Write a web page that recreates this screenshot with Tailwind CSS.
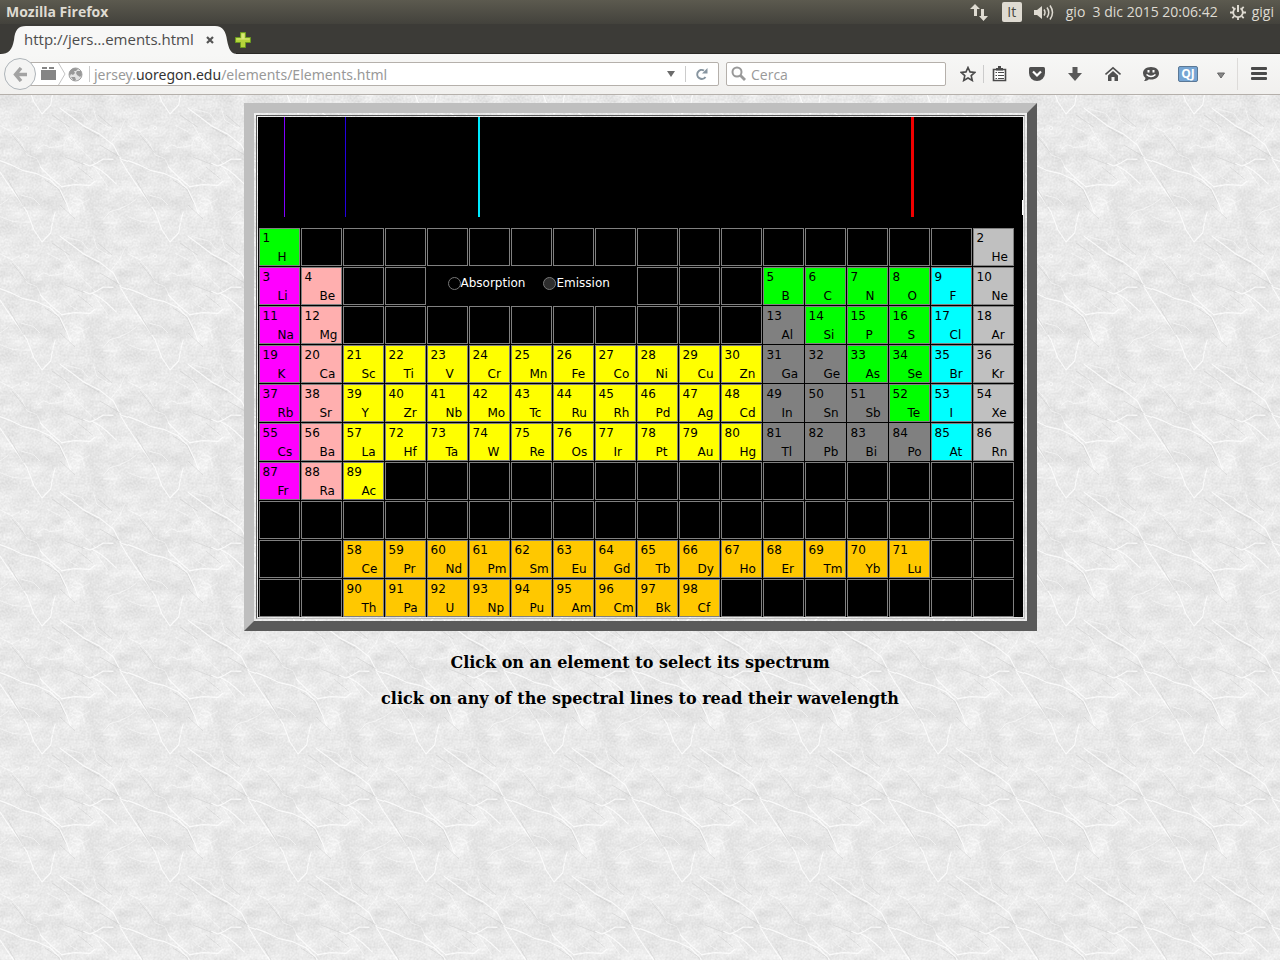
<!DOCTYPE html>
<html lang="it">
<head>
<meta charset="utf-8">
<title>Mozilla Firefox</title>
<script src="https://cdn.jsdelivr.net/npm/@tailwindcss/browser@4"></script>
</head>
<body class="min-h-screen flex flex-col font-['Open_Sans','Noto_Sans',sans-serif] text-sm">
<header>
  <div class="h-6 flex items-center justify-between px-1.5 bg-linear-to-b from-[#5c5a4f] to-[#43423c] text-[#dfdbd2]">
    <h1 class="font-bold text-sm">Mozilla Firefox</h1>
    <div class="flex items-center whitespace-nowrap">
      <svg class="w-[18px] h-[17px] mr-3.5" viewBox="0 0 18 17" fill="#dfdbd2"><path d="M5 0L10 5H7v7H4V5H0zM11 5h3v7h4l-4.500 5L9 12h2z"/></svg>
      <span class="w-5 h-5 mr-3 rounded-xs bg-[#dfdbd2] text-[#47463f] text-sm leading-5 text-center">It</span>
      <svg class="w-5 h-[17px] mr-3" viewBox="0 0 20 17" fill="none" stroke="#dfdbd2" stroke-width="1.500"><path d="M0 6h3l5-4v13l-5-4H0z" fill="#dfdbd2" stroke="none"/><path d="M10 5.500q2 3 0 6M13 3.500q3.500 5 0 10M16 1.500q5 7 0 14"/></svg>
      <time class="mr-3 whitespace-pre">gio  3 dic 2015 20:06:42</time>
      <svg class="w-4 h-4 mr-1.5" viewBox="0 0 16 16" fill="none" stroke="#dfdbd2"><path d="M5.500 4.300a4.800 4.800 0 1 0 5 0" stroke-width="1.800"/><path d="M8 1v7" stroke-width="2"/><path d="M2.300 2.800l2 2M13.700 2.800l-2 2M0 8.500h3M13 8.500h3M2.300 14.200l2-2M13.700 14.200l-2-2M8 13v3" stroke-width="1.800"/></svg>
      <span>gigi</span>
    </div>
  </div>
  <div class="h-[30px] bg-[#3c3b37] border-b border-[#2a2926] flex items-end">
    <div class="relative w-[236px] h-7 flex items-center pl-6 -mb-px">
      <svg class="absolute inset-0 w-[236px] h-7" viewBox="0 0 236 28"><path d="M0 28C9 28 12 24 14 14C15 4 18 0 26 0H215C223 0 226 6 227 14C229 24 231 28 238 28z" fill="#f7f7f6"/></svg>
      <span class="relative w-[178px] text-[15px] text-[#4c4c4c]">http://jers…ements.html</span>
      <button class="relative w-4 h-4 flex items-center justify-center" aria-label="Chiudi scheda"><svg class="w-2 h-2" viewBox="0 0 8 8" stroke="#555" stroke-width="2.200"><path d="M1 1l6 6M7 1L1 7"/></svg></button>
    </div>
    <button class="mb-[5px] -ml-px w-4 h-4" aria-label="Nuova scheda"><svg class="w-4 h-4" viewBox="0 0 16 16"><path d="M5.500 .5h5v5h5v5h-5v5h-5v-5h-5v-5h5z" fill="#b5d53b" stroke="#6b9a1f"/><path d="M6.500 1.500h3v5h5v1h-13v-1h5z" fill="#d8e87a"/></svg></button>
  </div>
  <div class="h-[41px] flex items-center bg-linear-to-b from-[#f7f7f6] to-[#f1f0ee] border-b border-[#b5b0ab] pl-1 pr-[13px]">
    <button class="relative z-10 shrink-0 w-8 h-8 rounded-full border border-[#aeb4b9] bg-[#f4f4f3] flex items-center justify-center" aria-label="Indietro"><svg class="w-[15px] h-[15px]" viewBox="0 0 15 15" fill="none" stroke="#a3a3a3" stroke-width="3.400"><path d="M14 7.500H3M8 1L2.500 7.500L8 14"/></svg></button>
    <div class="-ml-2 flex-1 h-6 min-w-0 bg-white border border-[#b5b0ab] rounded-r-xs flex items-center pl-3">
      <svg class="w-[15px] h-[14px] mr-0.5 shrink-0" viewBox="0 0 15 14"><path d="M0 3h15v10H0zM1 0h5v2H1zM8 0h5v2H8z" fill="#858585"/></svg>
      <svg class="w-2 h-[22px] mr-0.5 shrink-0" viewBox="0 0 8 22" fill="none" stroke="#c4c4c4"><path d="M.5 0L7 11L.5 22"/></svg>
      <svg class="w-[15px] h-[15px] shrink-0 mr-1.5" viewBox="0 0 15 15"><circle cx="7.500" cy="7.500" r="6.500" fill="#e2e2e2" stroke="#a0a0a0"/><path d="M1 7q1-5 6-6l3 1-2 2-2 0 1 2-2 2-2-1-1 2zM9 4l4 0 1 4-2 2-3-2-1-2zM3 10l4 0 1 3-2 1z" fill="#989898"/></svg>
      <span class="w-px h-4 bg-[#ccc] mr-1"></span>
      <a href="#" class="flex-1 pt-0.5 font-['Noto_Sans',sans-serif] text-[#999]">jersey.<span class="text-[#333]">uoregon.edu</span>/elements/Elements.html</a>
      <button class="w-7 h-5 flex items-center justify-center" aria-label="Cronologia"><svg class="w-2 h-1.5" viewBox="0 0 8 6"><path d="M0 0h8L4 6z" fill="#6b6b6b"/></svg></button>
      <span class="w-px h-4 bg-[#ccc]"></span>
      <button class="w-8 h-5 flex items-center justify-center" aria-label="Ricarica"><svg class="w-3 h-3" viewBox="0 0 12 12" fill="none" stroke="#8795a0" stroke-width="2"><path d="M9.500 9A4.500 4.500 0 1 1 8 2.500"/><path d="M11.500 0v5.500H6z" fill="#8795a0" stroke="none"/></svg></button>
    </div>
    <label class="ml-[7px] w-[220px] h-6 bg-white border border-[#b5b0ab] rounded-xs flex items-center pl-1">
      <svg class="w-4 h-4 mr-1" viewBox="0 0 16 16" fill="none" stroke="#999"><circle cx="6" cy="6" r="4.500" stroke-width="2"/><path d="M9 9l5 5" stroke-width="2.800"/></svg>
      <input class="w-44 pt-0.5 outline-none placeholder-[#999]" placeholder="Cerca" aria-label="Cerca">
    </label>
    <nav class="flex items-center ml-3.5">
      <button class="w-4 h-4" aria-label="Segnalibro"><svg class="w-4 h-4" viewBox="0 0 16 16" fill="none" stroke="#4a4a4a" stroke-width="1.600"><path d="M8 1.500l2 4.400 4.800.5-3.600 3.200 1.100 4.900L8 12l-4.300 2.500 1.100-4.900L1.200 6.400 6 5.900z"/></svg></button>
      <span class="w-px h-[18px] bg-[#ccc] ml-[7px] mr-2"></span>
      <button class="w-[15px] h-4 mr-[22px]" aria-label="Elenco segnalibri"><svg class="w-[15px] h-4" viewBox="0 0 15 16"><path d="M1.500 3.500h12v11h-12z" fill="#fff" stroke="#4a4a4a" stroke-width="1.600"/><path d="M4 2h2V0h3v2h2v2.500H4zM3.500 6h1.500v1H3.500zM6 6h6v1H6zM3.500 9h1.500v1H3.500zM6 9h6v1H6zM3.500 12h1.500v1H3.500zM6 12h6v1H6z" fill="#4a4a4a"/></svg></button>
      <button class="w-4 h-4 mr-[22px]" aria-label="Pocket"><svg class="w-4 h-4" viewBox="0 0 16 16"><path d="M1.500 1h13q1.500 0 1.500 1.500V7a8 8 0 0 1-16 0V2.500Q0 1 1.500 1z" fill="#4f4f4f"/><path d="M4 5.500l4 4 4-4" fill="none" stroke="#fff" stroke-width="2.200"/></svg></button>
      <button class="w-4 h-4 mr-[22px]" aria-label="Scaricamenti"><svg class="w-4 h-4" viewBox="0 0 16 16"><path d="M5.500 1h5v6H15l-7 8-7-8h4.500z" fill="#595959"/></svg></button>
      <button class="w-4 h-4 mr-[22px]" aria-label="Pagina iniziale"><svg class="w-4 h-4" viewBox="0 0 16 16"><path d="M.5 8.500L8 1.800l7.500 6.700" fill="none" stroke="#505050" stroke-width="1.600"/><path d="M3 9.500l5-4.500L13 9.500V15H9.500v-4h-3v4H3z" fill="#505050"/></svg></button>
      <button class="w-4 h-4 mr-[19px]" aria-label="Hello"><svg class="w-4 h-4" viewBox="0 0 16 16"><path d="M8 1c5 0 8 2.800 8 6.200S13 13.500 8 13.500q-1 0-2-.2Q4 15.500 1 15q1.500-1.500 1.500-3Q0 10 0 7.200C0 3.800 3 1 8 1z" fill="#505050"/><path d="M4.500 4h2v2.500h-2zM9.500 4h2v2.500h-2z" fill="#fff"/><path d="M3.500 8.500q4.500 4 9 0" fill="none" stroke="#fff" stroke-width="1.500"/></svg></button>
      <button class="w-5 h-4 rounded-xs border border-[#5b7896] bg-[#76a5d3] text-white font-bold text-xs leading-3.5 mr-[19px]" aria-label="QJ">QJ</button>
      <button class="w-2 h-4 mr-3" aria-label="Altro"><svg class="w-2 h-4" viewBox="0 0 8 16"><path d="M.5 7h7L4 12z" fill="#888" stroke="#666"/></svg></button>
      <span class="w-px h-8 bg-[#dddbd9] mr-[13px]"></span>
      <button class="w-4 h-4" aria-label="Menu"><svg class="w-4 h-4" viewBox="0 0 16 16" fill="#4a4a4a"><rect y="1" width="16" height="3" rx="1"/><rect y="6" width="16" height="3" rx="1"/><rect y="11" width="16" height="3" rx="1"/></svg></button>
    </nav>
  </div>
</header>
<main class="relative isolate flex-1 bg-[#e6e6e6] flex flex-col items-center pt-2">
  <svg class="absolute inset-0 w-full h-full -z-10" aria-hidden="true">
    <defs>
      <filter id="grain" x="0" y="0" width="100%" height="100%" color-interpolation-filters="sRGB"><feTurbulence type="fractalNoise" baseFrequency=".05 .07" numOctaves="6" seed="9" stitchTiles="stitch" result="soft"/><feColorMatrix values=".1 .06 0 0 .832  .1 .06 0 0 .832  .1 .06 0 0 .832  0 0 0 0 1" result="base"/><feTurbulence type="fractalNoise" baseFrequency=".5" numOctaves="2" seed="2" stitchTiles="stitch"/><feColorMatrix values=".1 0 0 0 0  .1 0 0 0 0  .1 0 0 0 0  0 0 0 0 1" result="fine"/><feComposite in="base" in2="fine" operator="arithmetic" k1="0" k2="1" k3="1" k4="-.05"/></filter>
      <pattern id="marble" width="128" height="128" patternUnits="userSpaceOnUse">
        <rect width="128" height="128" filter="url(#grain)"/>
        <g transform="scale(.33333)" fill="none" stroke-linejoin="round">
          <g stroke="#fff" stroke-width="3.500" opacity=".8">
            <path d="M-14 192L30 208L70 227L110 236L150 254L180 284L200 325L212 358"/>
            <path d="M180 40L215 65L250 92L300 118L340 150L362 192L384 199"/>
            <path d="M120 215L150 245L185 275L225 269L270 271L285 258"/>
            <path d="M250 205L270 213L290 204L310 192L340 193"/>
            <path d="M275 210L300 224L320 240L350 268"/>
            <path d="M362 195L382 228L410 270"/>
            <path d="M-22 195L-2 228L26 270L56 312L81 350L102 405"/>
            <path d="M81 -34L102 21L126 57L152 30L158 -5L170 -30"/>
            <path d="M158 379L166 350"/>
          </g>
          <g stroke="#fff" stroke-width="2.500" opacity=".6">
            <path d="M0 92L35 110L65 145L82 180L110 190L130 230M35 110L60 98M110 165L130 148L150 158L190 152L200 128L215 140"/>
            <path d="M195 232L210 248L235 262M285 220L310 255L325 277M220 312L245 316L252 345M270 312L235 330L215 320"/>
            <path d="M308 375L330 350L358 342L392 326M310 382L350 384L372 388M62 300L100 310L120 330M0 330L25 312M375 75L360 108L335 140M280 40L290 75L330 100M190 80L230 150L285 205M190 40L245 55L265 80M140 90L180 110"/>
            <path d="M0 365L40 380L90 382M310 0L350 2"/>
            <circle cx="81" cy="99" r="5"/><circle cx="210" cy="130" r="4"/>
          </g>
          <g stroke="#c4c4c4" stroke-width="2.500" opacity=".5"><path d="M36 120L80 174M156 60L210 97M234 216L280 254M24 255L72 336M195 186L255 210M300 150L360 186M180 330L225 372M294 60L336 96M135 255L176 282L196 325M252 98L298 124"/></g>
        </g>
      </pattern>
    </defs>
    <rect width="100%" height="100%" fill="url(#marble)"/>
  </svg>
  <div class="border-10 border-t-[#bfbfbf] border-l-[#bfbfbf] border-r-[#5a5a5a] border-b-[#5a5a5a] p-0.5">
    <div class="border border-t-[#5a5a5a] border-l-[#5a5a5a] border-r-[#bfbfbf] border-b-[#bfbfbf] p-px">
      <div class="relative bg-black w-[765px] font-['DejaVu_Sans',sans-serif] text-xs">
        <svg class="block w-full h-[100px]" viewBox="0 0 765 100" shape-rendering="crispEdges"><rect x="26" width="1" height="100" fill="#8000ff"/><rect x="87" width="1" height="100" fill="#2400e0"/><rect x="220" width="2" height="100" fill="#00eaff"/><rect x="653" width="3" height="100" fill="#f00000"/></svg>
        <span class="absolute right-0 top-[83px] w-px h-[15px] bg-white"></span>
        <div id="table" class="grid grid-cols-[repeat(18,41px)] auto-rows-[38px] gap-px pt-[11px] pl-px">
          <fieldset class="col-start-5 col-span-5 row-start-2 flex items-start pt-2 pl-[21px] gap-[18px] text-white">
            <label class="flex items-center"><input type="radio" name="mode" class="appearance-none w-[13px] h-[13px] rounded-full border border-[#777]">Absorption</label>
            <label class="flex items-center"><input type="radio" name="mode" checked class="appearance-none w-[13px] h-[13px] rounded-full border border-[#777] bg-[#2d2d2d]">Emission</label>
          </fieldset>
        </div>
      </div>
    </div>
  </div>
  <div class="font-['DejaVu_Serif',serif] font-bold text-base leading-5 text-center text-black mt-[22px] flex flex-col gap-4">
    <p>Click on an element to select its spectrum</p>
    <p>click on any of the spectral lines to read their wavelength</p>
  </div>
</main>
<script>
const table = document.getElementById('table');
const kinds = {
  g: 'bg-[#00ff00]', m: 'bg-[#ff00ff]', p: 'bg-[#ffafaf]', y: 'bg-[#ffff00]',
  d: 'bg-[#808080]', c: 'bg-[#00ffff]', s: 'bg-[#c0c0c0]', o: 'bg-[#ffc800]'
};
const symbols = 'H He Li Be B C N O F Ne Na Mg Al Si P S Cl Ar K Ca Sc Ti V Cr Mn Fe Co Ni Cu Zn Ga Ge As Se Br Kr Rb Sr Y Zr Nb Mo Tc Ru Rh Pd Ag Cd In Sn Sb Te I Xe Cs Ba La Ce Pr Nd Pm Sm Eu Gd Tb Dy Ho Er Tm Yb Lu Hf Ta W Re Os Ir Pt Au Hg Tl Pb Bi Po At Rn Fr Ra Ac Th Pa U Np Pu Am Cm Bk Cf'.split(' ');
// One letter per cell gives its colour; the list gives the atomic numbers in order.
const rows = [
  ['g................s', [1, 2]],
  ['mp..     ...ggggcs', [3, 4, 5, 6, 7, 8, 9, 10]],
  ['mp..........dgggcs', [11, 12, 13, 14, 15, 16, 17, 18]],
  ['mpyyyyyyyyyyddggcs', range(19, 36)],
  ['mpyyyyyyyyyydddgcs', range(37, 54)],
  ['mpyyyyyyyyyyddddcs', [55, 56, 57, ...range(72, 86)]],
  ['mpy...............', [87, 88, 89]],
  ['..................', []],
  ['..oooooooooooooo..', range(58, 71)],
  ['..ooooooooo.......', range(90, 98)]
];
function range(a, b) { return Array.from({ length: b - a + 1 }, (_, i) => a + i); }
rows.forEach(([line, numbers], r) => {
  let next = 0;
  [...line].forEach((kind, c) => {
    if (kind === ' ') return;
    const filled = kind !== '.';
    const cell = document.createElement(filled ? 'button' : 'div');
    cell.className = 'border border-[#808080] ' + (filled ? kinds[kind] + ' flex flex-col justify-start text-left text-black pl-[3px] leading-[19px]' : '');
    cell.style.gridArea = (r + 1) + ' / ' + (c + 1);
    if (filled) {
      const n = numbers[next++];
      cell.innerHTML = '<span>' + n + '</span><span class="pl-[15px]">' + symbols[n - 1] + '</span>';
    }
    table.append(cell);
  });
});
</script>
</body>
</html>
